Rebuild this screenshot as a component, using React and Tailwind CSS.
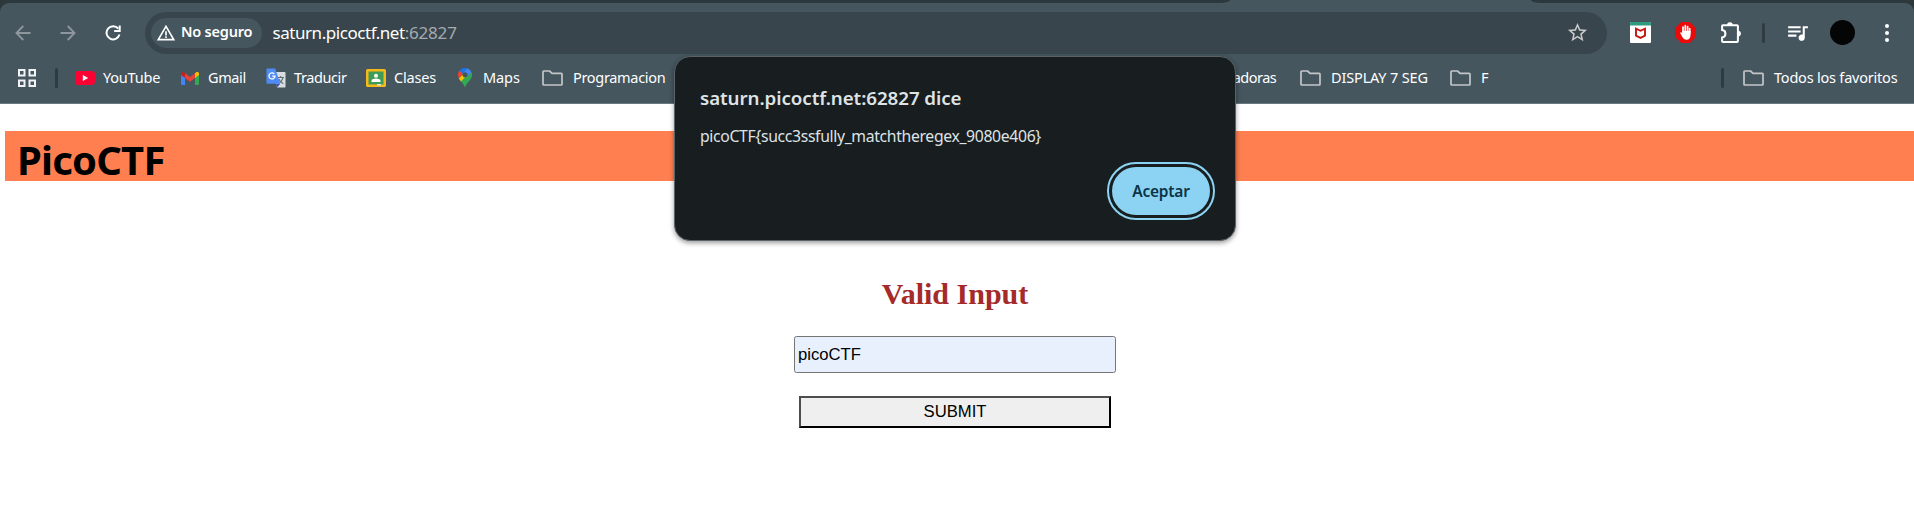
import { MdQueueMusic, MdStarBorder, MdWarningAmber } from "react-icons/md";

function Arrow({ flip }) {
  return (
    <svg viewBox="0 0 16 16" className={flip ? "size-4 rotate-180" : "size-4"} fill="none" stroke="#8d979d" strokeWidth="1.8">
      <path d="M15.5 8H1.8M8.3 1 1.4 8l6.9 7" />
    </svg>
  );
}

function Reload() {
  return (
    <svg viewBox="0 0 16 16" className="size-4" fill="none" stroke="#fff" strokeWidth="2">
      <path d="M13.3 3.7A6.6 6.6 0 1 0 14.5 9.6" />
      <path d="M14.7 .5V5.9H9.2" />
    </svg>
  );
}

function Apps() {
  return (
    <svg viewBox="0 0 18 18" className="size-[18px]" fill="none" stroke="#f1f3f4" strokeWidth="2">
      <path d="M1 1h5.5v5.5H1zM11.5 1H17v5.5h-5.5zM1 11.5h5.5V17H1zM11.5 11.5H17V17h-5.5z" />
    </svg>
  );
}

function YouTube() {
  return (
    <svg viewBox="0 0 20 20" className="size-5">
      <rect y="3" width="20" height="14" rx="3.4" fill="#ff0033" />
      <path d="M7.8 7v6l5.4-3z" fill="#fff" />
    </svg>
  );
}

function Gmail() {
  return (
    <svg viewBox="0 0 20 20" className="size-5">
      <path d="M1 6v9.8c0 .7.5 1.2 1.2 1.2H5V9z" fill="#4285f4" />
      <path d="M15 9v8h2.8c.7 0 1.200-.5 1.200-1.200V6z" fill="#34a853" />
      <path d="M5 5.200V10l5 3.800 5-3.800V5.200L10 9z" fill="#ea4335" />
      <path d="M1 5.500V7l4 3V5.200l-.9-.7C2.800 3.500 1 4.200 1 5.500z" fill="#c5221f" />
      <path d="M15 5.200V10l4-3V5.500c0-1.300-1.800-2-3.100-1z" fill="#fbbc04" />
    </svg>
  );
}

function Translate() {
  return (
    <svg viewBox="0 0 20 20" className="size-5">
      <path d="M8 4h10.500c.6 0 1 .4 1 1v13.500c0 .6-.4 1-1 1H11z" fill="#d9dde0" />
      <path d="M11.500 9.500h6.500M14.700 8v1.500M17 9.500c-.5 2.500-2.500 4.800-4.500 6M12.800 11c.8 2 2.500 3.800 4.500 4.700" fill="none" stroke="#607076" strokeWidth="1.100" />
      <path d="M11 19.500l3.300-3.700H10z" fill="#3451b2" />
      <path d="M1.500.5h7.700l5 15.300H1.500c-.6 0-1-.4-1-1V1.500c0-.6.4-1 1-1z" fill="#4f8bf5" />
      <path d="M8.300 6A3 3 0 1 0 9 8.200H6.200" fill="none" stroke="#fff" strokeWidth="1.300" />
    </svg>
  );
}

function Classroom() {
  return (
    <svg viewBox="0 0 20 20" className="size-5">
      <rect y="1" width="20" height="18" rx="1.500" fill="#f6b918" />
      <rect x="2.500" y="3.500" width="15" height="13" fill="#3f9b56" />
      <circle cx="10" cy="7.700" r="2" fill="#fff" />
      <path d="M5.500 14v-1c0-1.600 2.500-2.400 4.500-2.400s4.500.8 4.500 2.400v1z" fill="#fff" />
      <path d="M11 16h4v1.500h-4z" fill="#d9e8dc" />
    </svg>
  );
}

function Maps() {
  return (
    <svg viewBox="0 0 20 20" className="size-5">
      <path d="M10 19.800c.5-2.500 2-4.200 3.700-6.200 1.800-2.200 3.300-4 3.300-6.800 0-1-.2-1.900-.6-2.700L5.200 12.500c2 2.500 4.200 4.500 4.800 7.300z" fill="#34a853" />
      <path d="M3.800 10.200c.4.800.9 1.600 1.700 2.600l.6.700 6.300-7L9 5z" fill="#fbbc04" />
      <path d="M4.600 2.500C3.500 3.700 3 5.200 3 6.800c0 1.300.3 2.400.8 3.400L8.500 5z" fill="#ea4335" />
      <path d="M4.600 2.500A7 7 0 0 1 12.200.300L7.800 5.500z" fill="#1a73e8" />
      <path d="M12.200.3a7 7 0 0 1 4.200 3.800L12.200 9 7.800 5.500z" fill="#4285f4" />
      <circle cx="10" cy="6.800" r="2.500" fill="#45565f" />
    </svg>
  );
}

function Folder() {
  return (
    <svg viewBox="0 0 21 16" className="h-4 w-[21px]" fill="none" stroke="#c3c6c8" strokeWidth="1.700" strokeLinejoin="round">
      <path d="M1 1.800Q1 1 1.800 1H7.500L10 3.300h9.200q.8 0 .8.800V14.200q0 .8-.8.800H1.800Q1 15 1 14.200z" />
    </svg>
  );
}

function McAfee() {
  return (
    <svg viewBox="0 0 21 21" className="size-[21px]">
      <rect width="21" height="21" rx="1" fill="#fff" />
      <path d="M1 0h19q1 0 1 1v2.500H0V1q0-1 1-1z" fill="#2f9c80" />
      <path d="M6 6.700l4.500 2.100L15 6.700v7L10.500 15.900 6 13.700z" fill="none" stroke="#c01818" strokeWidth="1.900" />
    </svg>
  );
}

function AdBlock() {
  return (
    <svg viewBox="0 0 21 21" className="size-[21px]">
      <path d="M6.200 0h8.600L21 6.200v8.600L14.800 21H6.200L0 14.800V6.200z" fill="#ea0a0a" />
      <path d="M8 10V5M10.300 9.500V3.700M12.600 10V4.500M14.700 11V6.500" stroke="#fff" strokeWidth="1.700" strokeLinecap="round" />
      <path d="M7.150 9h8.400v4.200c0 2.600-1.500 4.500-4 4.500-2 0-3.300-.9-4.200-2.600L5.300 11.200c-.3-.8.700-1.300 1.300-.7l.7.900z" fill="#fff" />
    </svg>
  );
}

function Puzzle() {
  return (
    <svg viewBox="0 0 22 22" className="size-[22px]">
      <path d="M3 3.200h14q.9 0 .9.900v15q0 .9-.9.900H3q-.9 0-.9-.9V15.500c4.400-.4 4.400-7 0-7.400V4.100q0-.9.900-.9z" fill="none" stroke="#fff" strokeWidth="2" />
      <path d="M7 3.200a2.900 2.900 0 0 1 5.800 0zM18 8.700a2.900 2.900 0 0 1 0 5.800z" fill="#fff" />
    </svg>
  );
}

function Bookmark({ icon, label, className, gap = "gap-2" }) {
  return (
    <div className={`flex shrink-0 items-center whitespace-nowrap ${gap} ${className}`}>
      {icon}
      <span className="-mt-0.5">{label}</span>
    </div>
  );
}

function Toolbar() {
  return (
    <div className="flex h-[58px] items-center pt-px">
      <div className="flex w-[145px] shrink-0 items-center gap-[29px] pl-[15px]">
        <Arrow />
        <Arrow flip />
        <Reload />
      </div>
      <div className="flex h-[42px] w-[1462px] shrink-0 items-center rounded-full bg-[#39454c] pl-1.5">
        <div className="flex h-[30px] w-[111px] items-center gap-[5px] rounded-full bg-[#45565f] pl-[5px]">
          <MdWarningAmber className="size-5 shrink-0 text-white" />
          <span className="-mt-px whitespace-nowrap text-[14.5px] font-semibold tracking-[-0.2px] text-white">No seguro</span>
        </div>
        <div className="ml-[10.5px] mt-px whitespace-nowrap text-[17px] leading-6 tracking-[-0.45px] text-white">
          saturn.picoctf.net<span className="tracking-[-0.2px] text-[#a3abaf]">:62827</span>
        </div>
        <MdStarBorder className="ml-auto mr-[18px] size-[23px] text-[#c9c9cb]" />
      </div>
      <div className="flex flex-1 items-center pl-[23px]">
        <McAfee />
        <div className="w-6" />
        <AdBlock />
        <div className="w-6" />
        <Puzzle />
        <div className="ml-5 h-5 w-[3px] rounded-full bg-[#2f3b41]" />
        <MdQueueMusic className="ml-5 size-[25px] text-white" />
        <div className="ml-5 size-[25px] rounded-full bg-[#040505]" />
        <div className="ml-[30px] flex flex-col gap-[3px]">
          <div className="size-1 rounded-full bg-white" />
          <div className="size-1 rounded-full bg-white" />
          <div className="size-1 rounded-full bg-white" />
        </div>
      </div>
    </div>
  );
}

function BookmarksBar() {
  return (
    <div className="flex h-[43px] items-center border-b border-[#6d7980] pb-2 text-[14.5px] leading-5 text-white">
      <div className="flex h-full w-[75px] shrink-0 items-center pl-[18px]">
        <Apps />
        <div className="ml-[19px] h-5 w-[3px] rounded-full bg-[#2f3b41]" />
      </div>
      <Bookmark icon={<YouTube />} label="YouTube" className="w-[105px] tracking-[-0.2px]" />
      <Bookmark icon={<Gmail />} label="Gmail" className="w-[86px] tracking-[-0.4px]" />
      <Bookmark icon={<Translate />} label="Traducir" className="w-[100px] tracking-[-0.4px]" />
      <Bookmark icon={<Classroom />} label="Clases" className="w-[89px] tracking-[-0.2px]" />
      <Bookmark icon={<Maps />} label="Maps" className="w-[87px] tracking-[-0.1px]" />
      <Bookmark icon={<Folder />} label="Programacion" gap="gap-2.5" className="w-[622px] tracking-[-0.32px]" />
      <Bookmark icon={<Folder />} label="Calculadoras" gap="gap-2.5" className="w-[136px] tracking-[-0.5px]" />
      <Bookmark icon={<Folder />} label="DISPLAY 7 SEG" gap="gap-2.5" className="w-[150px] tracking-[-0.15px]" />
      <Bookmark icon={<Folder />} label="F" gap="gap-2.5" className="w-[271px]" />
      <div className="mr-[19px] h-5 w-[3px] shrink-0 rounded-full bg-[#2f3b41]" />
      <Bookmark icon={<Folder />} label="Todos los favoritos" gap="gap-2.5" className="tracking-[-0.21px]" />
    </div>
  );
}

function AlertDialog() {
  return (
    <div className="absolute left-[674px] top-[56px] flex h-[185px] w-[562px] flex-col rounded-[16px] border border-[#5a6468] bg-[#181d1f] pl-[25px] pr-5 pt-[29px] shadow-[0_2px_5px_rgba(0,0,0,0.4)]">
      <div className="whitespace-nowrap text-[18.75px] font-semibold leading-6 tracking-[-0.07px] text-[#dee3e6]">saturn.picoctf.net:62827 dice</div>
      <div className="mt-3.5 whitespace-nowrap text-[15.75px] leading-6 tracking-[-0.34px] text-[#dee3e6]">
        picoCTF&#123;succ3ssfully_matchtheregex_9080e406&#125;
      </div>
      <button className="mt-3.5 flex h-[58px] w-[108px] shrink-0 items-center justify-center self-end rounded-full border-2 border-[#8cd3f3]">
        <span className="flex h-12 w-[98px] items-center justify-center rounded-full bg-[#8cd3f3] pt-0.5 text-[15.5px] font-semibold tracking-[-0.25px] text-[#0b3547]">
          Aceptar
        </span>
      </button>
    </div>
  );
}

export default function App() {
  return (
    <div className="relative h-[511px] w-[1914px] overflow-hidden bg-white font-['Noto_Sans',sans-serif]">
      <div className="bg-[#2d383d]">
        <div className="flex h-[3px] justify-between bg-[#45565f]">
          <div className="w-[1230px] rounded-br-[10px_3px] bg-[#2d383d]" />
          <div className="w-[383px] rounded-bl-[10px_3px] bg-[#2d383d]" />
        </div>
        <div className="rounded-t-[9px] bg-[#45565f]">
          <Toolbar />
          <BookmarksBar />
        </div>
      </div>
      <h1 className="ml-[5px] mt-[27px] h-[50px] bg-[#ff7f50] pl-3 text-[40px] font-bold leading-[57px] tracking-[-0.8px] text-black">PicoCTF</h1>
      <div className="flex w-[1910px] flex-col items-center pt-24">
        <h2 className="font-['Liberation_Serif',serif] text-[30px] font-bold leading-[34px] text-[#a52a2a]">Valid Input</h2>
        <input
          defaultValue="picoCTF"
          className="mt-[25px] h-[37px] w-[322px] rounded-[2.5px] border border-[#767676] bg-[#e8f0fe] px-[3px] font-['Liberation_Sans',sans-serif] text-[16.67px] text-black outline-none"
        />
        <button className="mt-[23px] flex h-8 w-[312px] items-center justify-center border-2 border-b-black border-l-[#4d4d4d] border-r-black border-t-[#4d4d4d] bg-[#efefef] pb-0.5 font-['Liberation_Sans',sans-serif] text-[16.67px] text-black">
          SUBMIT
        </button>
      </div>
      <AlertDialog />
    </div>
  );
}
